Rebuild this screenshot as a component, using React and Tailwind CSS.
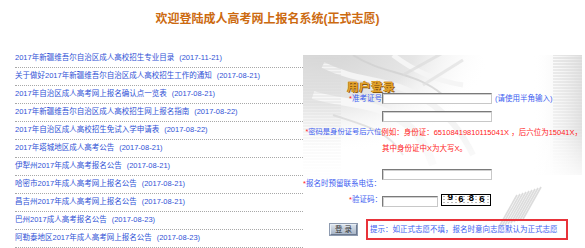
import React from "react";

const links = [
  ["2017年新疆维吾尔自治区成人高校招生专业目录", "(2017-11-21)"],
  ["关于做好2017年新疆维吾尔自治区成人高校招生工作的通知", "(2017-08-21)"],
  ["2017年自治区成人高考网上报名确认点一览表", "(2017-08-21)"],
  ["2017年新疆维吾尔自治区成人高校招生网上报名指南", "(2017-08-22)"],
  ["2017年自治区成人高校招生免试入学申请表", "(2017-08-22)"],
  ["2017年塔城地区成人高考公告", "(2017-08-21)"],
  ["伊犁州2017年成人高考报名公告", "(2017-08-21)"],
  ["哈密市2017年成人高考网上报名公告", "(2017-08-21)"],
  ["昌吉州2017年成人高考网上报名公告", "(2017-08-21)"],
  ["巴州2017成人高考报名公告", "(2017-08-23)"],
  ["阿勒泰地区2017年成人高考网上报名公告", "(2017-08-23)"],
];

const FONT = { fontFamily: '"Liberation Sans", "Noto Sans CJK SC", sans-serif' };

function Input({ w }) {
  return (
    <div
      className={`${w} h-[11px] bg-white border border-t-[#7a7a7a] border-l-[#7a7a7a] border-r-[#c8c8c8] border-b-[#c8c8c8] shadow-[inset_1px_1px_0_#d0d0d0]`}
    />
  );
}

function Label({ children }) {
  return (
    <span className="text-[#3b5cf0]">
      <span className="text-[#ff2020]">*</span>
      {children}
    </span>
  );
}

function PanelBg() {
  const leftStripes = [];
  for (let y = 2; y < 130; y += 3) {
    leftStripes.push(<line key={y} x1="0" y1={y} x2="38" y2={y} stroke="#dcdcdc" strokeWidth="1" opacity={1 - y / 140} />);
  }
  const rightStripes = [];
  for (let y = 0; y < 118; y += 3) {
    rightStripes.push(<line key={y} x1="250" y1={y} x2="279" y2={y} stroke="#d6d6d6" strokeWidth="1" opacity={1 - y / 125} />);
  }
  const diag = [];
  for (let i = 0; i < 9; i++) {
    diag.push(
      <line key={i} x1={196 + i * 3} y1={172 - i * 1} x2={214 + i * 3} y2={140 - i * 1} stroke="#d4d4d4" strokeWidth="1.6" opacity="0.8" />
    );
  }
  return (
    <svg className="absolute inset-0" width="279" height="193" viewBox="0 0 279 193">
      <defs>
        <radialGradient id="g1" cx="0.3" cy="0.2" r="0.7">
          <stop offset="0" stopColor="#d2d2d2" />
          <stop offset="0.55" stopColor="#e6e6e6" />
          <stop offset="1" stopColor="#ffffff" stopOpacity="0" />
        </radialGradient>
        <linearGradient id="g2" x1="0" y1="0" x2="1" y2="0">
          <stop offset="0" stopColor="#ffffff" stopOpacity="0" />
          <stop offset="1" stopColor="#e2e2e2" />
        </linearGradient>
        <linearGradient id="fadeDown" x1="0" y1="0" x2="0" y2="1">
          <stop offset="0" stopColor="#ffffff" stopOpacity="0" />
          <stop offset="1" stopColor="#ffffff" />
        </linearGradient>
      </defs>
      <rect x="0" y="0" width="279" height="193" fill="#ffffff" />
      <ellipse cx="70" cy="35" rx="120" ry="80" fill="url(#g1)" />
      <path d="M20 10 C60 30 90 20 130 50 C150 65 160 80 170 100" stroke="#f4f4f4" strokeWidth="6" fill="none" />
      <path d="M50 0 C80 20 110 15 140 40" stroke="#cfcfcf" strokeWidth="2" fill="none" opacity="0.7" />
      <path d="M10 40 C40 50 80 45 110 75 C120 85 125 95 130 110" stroke="#f7f7f7" strokeWidth="8" fill="none" />
      <path d="M30 60 C60 70 85 75 100 100" stroke="#d0d0d0" strokeWidth="2" fill="none" opacity="0.6" />
      <path d="M90 0 C110 15 130 25 160 30" stroke="#f5f5f5" strokeWidth="5" fill="none" />
      <path d="M100 20 L145 -5" stroke="#dcdcdc" strokeWidth="3" fill="none" opacity="0.7" />
      <path d="M120 30 L160 5" stroke="#e0e0e0" strokeWidth="3" fill="none" opacity="0.7" />
      {leftStripes}
      <rect x="230" y="0" width="49" height="120" fill="url(#g2)" />
      {rightStripes}
      <rect x="0" y="75" width="279" height="60" fill="url(#fadeDown)" />
      {diag}
    </svg>
  );
}

export default function App() {
  return (
    <div className="w-[585px] h-[248px] overflow-hidden bg-white" style={FONT}>
      <div className="h-[50px] flex justify-center pr-[50px] pt-[13px]">
        <h1 className="text-[12px] leading-[13px] font-bold text-[#cc6a10]">欢迎登陆成人高考网上报名系统(正式志愿)</h1>
      </div>
      <div className="flex">
        <ul className="ml-[15px] w-[288px] text-[7.5px]">
          {links.map(([t, d], i) => (
            <li key={i} className="h-[18px] flex items-center border-b border-dotted border-[#a8a8a8] pb-[1px]">
              <a className="text-[#2f52d6] whitespace-nowrap">
                {t}
                <span className="ml-[5px]">{d}</span>
              </a>
            </li>
          ))}
        </ul>
        <div className="relative mt-[5px] w-[279px] h-[193px] text-[7.5px]">
          <PanelBg />
          <div className="relative flex flex-col">
            <div className="mt-[27px] ml-[44px] h-[11px] leading-[11px] text-[11.5px] font-bold tracking-[0.5px] text-[#e3a22a] [text-shadow:1px_1px_0_#8a5a10,-0.5px_-0.5px_0_#b07020]">
              用户登录
            </div>
            <div className="flex h-[11px] items-center">
              <div className="w-[79px] flex justify-end whitespace-nowrap"><Label>准考证号</Label></div>
              <Input w="w-[110px]" />
              <span className="ml-[3px] text-[#3b5cf0] whitespace-nowrap">(请使用半角输入)</span>
            </div>
            <div className="flex h-[11px] items-center mt-[7px]">
              <div className="w-[79px]" />
              <Input w="w-[110px]" />
            </div>
            <div className="flex h-[11px] items-center mt-[5px]">
              <div className="w-[79px] flex justify-end whitespace-nowrap text-[7.3px]"><Label>密码是身份证号后六位</Label></div>
              <span className="text-[#ff1a1a] whitespace-nowrap">例如：身份证：65108419810115041X ，后六位为15041X，</span>
            </div>
            <div className="flex h-[11px] items-center mt-[5px]">
              <div className="w-[79px]" />
              <span className="text-[#ff1a1a] whitespace-nowrap">其中身份证中X为大写X。</span>
            </div>
            <div className="flex h-[20px] mt-[15px]">
              <div className="w-[79px] self-end leading-[10px] whitespace-nowrap"><Label>报名时预留联系电话：</Label></div>
              <div className="self-start"><Input w="w-[110px]" /></div>
            </div>
            <div className="flex h-[13px] items-center mt-[4px]">
              <div className="w-[79px] flex justify-end whitespace-nowrap"><Label>验证码：</Label></div>
              <div className="mt-[3px]"><Input w="w-[56px]" /></div>
              <div className="ml-[3px] w-[50px] h-[12px] border border-black bg-white flex items-center justify-around px-[3px] text-[9.5px] font-bold text-black [font-family:'Liberation_Mono',monospace] bg-[radial-gradient(#bbb_0.5px,transparent_0.6px)] bg-[length:4px_3px]">
                <span className="-mt-[2px]">9</span>
                <span className="mt-[2px]">6</span>
                <span>8</span>
                <span className="mt-[1px]">6</span>
              </div>
            </div>
            <div className="flex h-[21px] items-center mt-[13px]">
              <div className="ml-[27px] w-[27px] h-[11px] flex items-center justify-center text-[7.5px] text-[#333] bg-gradient-to-b from-[#d8e0ea] to-[#a9b6c8] border border-t-[#e8eef5] border-l-[#e8eef5] border-r-[#6c7a90] border-b-[#6c7a90] shadow-[0_0_0_1px_#8e9bb0]">
                登&nbsp;录
              </div>
              <div className="ml-[9px] w-[202px] h-[21px] border-2 border-[#e8333a] flex items-center pl-[2px] text-[#3b5cf0] whitespace-nowrap">
                提示：如正式志愿不填，报名时意向志愿默认为正式志愿
              </div>
            </div>
          </div>
        </div>
      </div>
    </div>
  );
}
